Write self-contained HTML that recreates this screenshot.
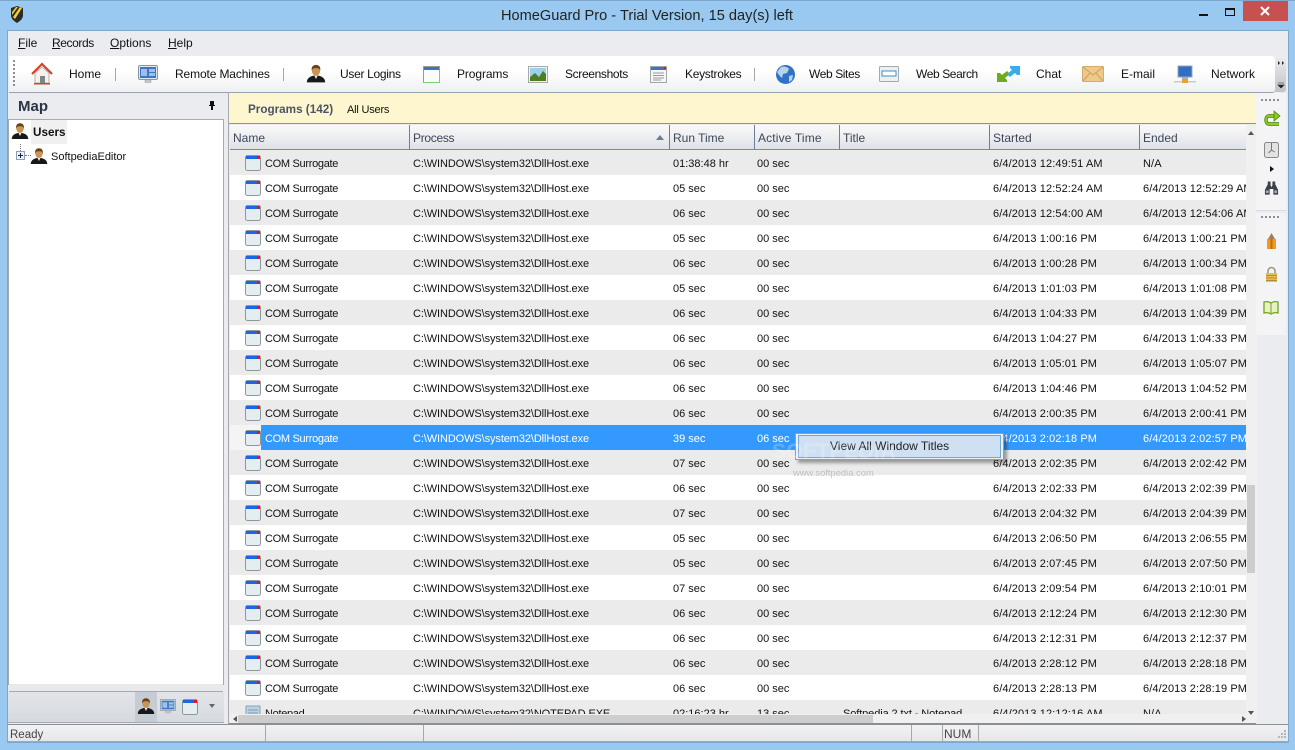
<!DOCTYPE html>
<html><head><meta charset="utf-8"><style>
html,body{margin:0;padding:0}
body{width:1295px;height:750px;overflow:hidden;position:relative;background:#99c9f0;font:12px/16px "Liberation Sans",sans-serif;color:#111}
.a{position:absolute}
.t{position:absolute;white-space:nowrap}
.tb{top:66px}
svg{position:absolute;overflow:visible}
.r{position:absolute;left:230px;width:1016px;height:25px;overflow:hidden;background:#fff;font-size:11px}
.g{background:#ebebeb}
.r span{position:absolute;top:6px;white-space:nowrap;overflow:hidden;height:16px}
.r svg{left:15px;top:5px}
.n{left:35px;width:140px;letter-spacing:-.3px}.p{left:183px;width:250px;letter-spacing:-.1px}.u{left:443px;width:80px}.v{left:527px;width:80px}.i{left:613px;width:140px;letter-spacing:-.1px}.s{left:763px;width:145px;letter-spacing:.1px}.e{left:913px;width:103px;letter-spacing:.1px}
.h{position:absolute;top:125px;height:25px;background:linear-gradient(#fafafa,#dfe1e6);border-bottom:1px solid #7f8b9c;box-sizing:border-box;color:#3c4658;padding:5px 0 0 3px;border-right:1px solid #6a7f9c;height:25px}
.sep{position:absolute;top:68px;width:1px;height:13px;background:#a4a8ae}
u{text-decoration:underline}
</style></head><body>
<svg width="0" height="0" style="position:absolute"><defs>
<symbol id="win" viewBox="0 0 16 16"><rect x=".5" y=".5" width="15" height="15" rx="2" fill="#e4eef0" stroke="#8d989c"/><rect x="1" y="1" width="14" height="3" fill="#1a66e6"/><rect x="12" y="1" width="3" height="3" fill="#e8102a"/></symbol>
<symbol id="user" viewBox="0 0 24 22"><path d="M1 21c0-5 4-7 8-8h6c4 1 8 3 8 8z" fill="#181818"/><path d="M10 13l2 4 2-4z" fill="#eee"/><ellipse cx="12" cy="7" rx="5" ry="6" fill="#c99455"/><path d="M7 7c-1-5 2-7 5-7s6 2 5 7c-1-3-3-3-5-3s-4 0-5 3z" fill="#6b4217"/></symbol>
<symbol id="mon" viewBox="0 0 20 20"><rect x=".5" y=".5" width="19" height="14" rx="1.5" fill="#dfe5ee" stroke="#8c97a6"/><rect x="2" y="2" width="16" height="11" fill="#3f78bd"/><rect x="3" y="4" width="6" height="7" fill="#9cc0e8"/><rect x="11" y="4" width="6" height="3" fill="#9cc0e8"/><rect x="11" y="8" width="6" height="3" fill="#9cc0e8"/><path d="M7 15h6v2.500H7z" fill="#c8ccd2" stroke="#999" stroke-width=".5"/></symbol>
</defs></svg>

<!-- title bar -->
<div class="a" style="left:0;top:0;width:1295px;height:1px;background:#7ea7cc"></div>
<svg style="left:10px;top:6px" width="14" height="17" viewBox="0 0 14 17"><path d="M1 2l6-2 6 2v7c0 4-3 6-6 8-3-2-6-4-6-8z" fill="#2b2b2b"/><path d="M3 11L10 1l2 1-7 11zM2 6l4-5h2L2 9z" fill="#f2cc30"/></svg>
<div class="t" style="left:501px;top:7px;font-size:14.6px;line-height:18px;color:#222">HomeGuard Pro - Trial Version, 15 day(s) left</div>
<div class="a" style="left:1199px;top:14px;width:9px;height:2px;background:#111"></div>
<div class="a" style="left:1225px;top:8px;width:8px;height:5px;border:1px solid #111;border-top-width:2px"></div>
<div class="a" style="left:1243px;top:1px;width:45px;height:20px;background:#c75050"></div>
<svg style="left:1260px;top:6px" width="10" height="10"><path d="M1 1l8 8M9 1L1 9" stroke="#fff" stroke-width="2"/></svg>

<!-- client -->
<div class="a" style="left:7px;top:30px;width:1282px;height:713px;background:#ebecf0;border:1px solid #7ea7cc;box-sizing:border-box"></div>
<!-- menu -->
<div class="t" style="left:18px;top:35px"><u>F</u>ile</div>
<div class="t" style="left:52px;top:35px;letter-spacing:-.4px"><u>R</u>ecords</div>
<div class="t" style="left:110px;top:35px"><u>O</u>ptions</div>
<div class="t" style="left:168px;top:35px"><u>H</u>elp</div>

<!-- toolbar -->
<div class="a" style="left:9px;top:56px;width:1266px;height:36px;background:linear-gradient(#fff,#fff 40%,#eff0f2);border-radius:0 3px 3px 0;border-bottom:1px solid #9aa3ad;box-sizing:content-box"></div>
<div class="a" style="left:13px;top:60px;width:2px;height:28px;background:repeating-linear-gradient(#8a8f96 0 2px,transparent 2px 4px)"></div>
<svg style="left:31px;top:63px" width="22" height="22" viewBox="0 0 22 22"><path d="M4 10v10h14V10L11 4z" fill="#f4f2ee" stroke="#b9b4ac"/><path d="M1 11L11 1l10 10" fill="none" stroke="#d8402a" stroke-width="2.200"/><rect x="9" y="13" width="5" height="7" fill="#80858a"/><rect x="3" y="20" width="16" height="1.500" fill="#d8402a"/></svg>
<div class="t tb" style="left:69px">Home</div><div class="sep" style="left:115px"></div>
<svg style="left:138px;top:65px" width="20" height="20"><use href="#mon" width="20" height="20"/></svg>
<div class="t tb" style="left:175px;letter-spacing:-.13px">Remote Machines</div><div class="sep" style="left:283px"></div>
<svg style="left:306px;top:64px" width="20" height="20"><use href="#user" width="20" height="20"/></svg>
<div class="t tb" style="left:340px;letter-spacing:-.3px">User Logins</div>
<svg style="left:423px;top:66px" width="17" height="17" viewBox="0 0 17 17"><rect x=".5" y=".5" width="16" height="16" fill="#fafcfa" stroke="#8fa08f"/><rect x="1" y="1" width="15" height="3" fill="#4a6cc4"/><path d="M.5 16.500H16.500V5" fill="none" stroke="#7ccf7c"/></svg>
<div class="t tb" style="left:457px;letter-spacing:-.1px">Programs</div>
<svg style="left:528px;top:66px" width="20" height="17" viewBox="0 0 20 17"><rect x=".5" y=".5" width="19" height="16" fill="#f2f2f0" stroke="#a8a8a4"/><rect x="2" y="2" width="16" height="13" fill="#9fd0ea"/><path d="M2 15v-4l5-4 4 4 4-6 3 3v7z" fill="#4f7d22"/></svg>
<div class="t tb" style="left:565px;letter-spacing:-.35px">Screenshots</div>
<svg style="left:650px;top:66px" width="17" height="17" viewBox="0 0 17 17"><rect x=".5" y=".5" width="16" height="16" fill="#f6f6f6" stroke="#9aa"/><rect x="1" y="1" width="15" height="3" fill="#4a6cc4"/><rect x="14" y="1" width="2" height="2" fill="#e01020"/><path d="M3 7h11M3 9.500h11M3 12h11M3 14h8" stroke="#9a9a9a"/></svg>
<div class="t tb" style="left:685px;letter-spacing:-.3px">Keystrokes</div><div class="sep" style="left:754px"></div>
<svg style="left:776px;top:65px" width="19" height="19" viewBox="0 0 19 19"><circle cx="9.500" cy="9.500" r="9.500" fill="#2f74c4"/><path d="M5 2c3-1 7 0 8 2l-2 4-4 1-1 4-3-3-2-3zM13 11l4-1-1 5-3 2z" fill="#b6d4ee"/></svg>
<div class="t tb" style="left:809px;letter-spacing:-.4px">Web Sites</div>
<svg style="left:879px;top:66px" width="20" height="16" viewBox="0 0 20 16"><rect x=".5" y=".5" width="19" height="15" rx="1" fill="#eef0f0" stroke="#a6a8aa"/><rect x="3" y="5" width="14" height="5" fill="#fff" stroke="#3a90d0"/></svg>
<div class="t tb" style="left:916px;letter-spacing:-.4px">Web Search</div>
<svg style="left:997px;top:66px" width="23" height="16" viewBox="0 0 23 16"><path d="M0 16V7h3l2 2 5-4 3 3-5 4 2 2v2z" fill="#6cab1e"/><path d="M23 0v9h-3l-2-2-5 4-3-3 5-4-2-2V0z" fill="#39aee6"/></svg>
<div class="t tb" style="left:1036px">Chat</div>
<svg style="left:1082px;top:66px" width="22" height="16" viewBox="0 0 22 16"><rect x=".5" y=".5" width="21" height="15" rx="1" fill="#eec98a" stroke="#d4ac6c"/><path d="M1 1l10 8 10-8M1 15l7-8M21 15l-7-8" fill="none" stroke="#c9a060"/></svg>
<div class="t tb" style="left:1121px">E-mail</div>
<svg style="left:1174px;top:66px" width="22" height="18" viewBox="0 0 22 18"><rect x="4" y="0" width="14" height="11" fill="#2f6fc4" stroke="#98a4b2"/><rect x="8" y="11" width="6" height="2" fill="#aab"/><rect x="0" y="15" width="22" height="1.500" fill="#c8ccc8"/><rect x="8" y="13" width="6" height="4" fill="#e8a030"/></svg>
<div class="t tb" style="left:1211px">Network</div>
<div class="a" style="left:1275px;top:57px;width:11px;height:35px;background:linear-gradient(#ececee,#bfc2c6);border-radius:0 3px 3px 0"></div>
<svg style="left:1277px;top:60px" width="8" height="30"><path d="M1 1l2 2-2 2zM5 1l2 2-2 2z" fill="#222"/><path d="M1 23h6M1 25h6l-3 3z" fill="#222" stroke="#222" stroke-width=".6"/></svg>

<!-- map panel -->
<div class="t" style="left:18px;top:98px;font-size:15px;line-height:18px;font-weight:bold;color:#2c3444">Map</div>
<svg style="left:208px;top:101px" width="8" height="9"><path d="M2 0h4v4h1v1H5v4H3V5H1V4h1z" fill="#111"/></svg>
<div class="a" style="left:8px;top:119px;width:216px;height:566px;background:#fff;border:1px solid #a6a9ae;box-sizing:border-box"></div>
<svg style="left:11px;top:123px" width="18" height="17"><use href="#user" width="18" height="17"/></svg>
<div class="a" style="left:31px;top:120px;width:36px;height:24px;background:#f0f0f0"></div>
<div class="t" style="left:33px;top:125px;font-weight:bold;font-size:11.7px">Users</div>
<div class="a" style="left:20px;top:144px;height:7px;border-left:1px dotted #777"></div>
<div class="a" style="left:16px;top:151px;width:7px;height:7px;border:1px solid #8e9fb4;background:#eef"></div>
<svg style="left:16px;top:151px" width="9" height="9"><path d="M2 4.500h5M4.500 2v5" stroke="#123"/></svg>
<div class="a" style="left:25px;top:155px;width:6px;border-top:1px dotted #777"></div>
<svg style="left:30px;top:148px" width="18" height="17"><use href="#user" width="18" height="17"/></svg>
<div class="t" style="left:51px;top:149px;font-size:11px">SoftpediaEditor</div>
<div class="a" style="left:9px;top:684px;width:214px;height:7px;background:#e8e9ec;border-bottom:1px solid #a6a9ae"></div>
<div class="a" style="left:8px;top:692px;width:216px;height:31px;background:linear-gradient(#e2e4e8,#d6dae0);border-bottom:1px solid #a6a9ae;box-sizing:border-box"></div>
<div class="a" style="left:135px;top:692px;width:22px;height:30px;background:#c6ccd4"></div>
<svg style="left:137px;top:698px" width="18" height="17"><use href="#user" width="18" height="17"/></svg>
<svg style="left:160px;top:699px" width="16" height="16"><use href="#mon" width="16" height="16"/></svg>
<svg style="left:182px;top:699px" width="16" height="16"><use href="#win" width="16" height="16"/></svg>
<div class="a" style="left:209px;top:704px;border:3px solid transparent;border-top:4px solid #666"></div>

<!-- right list -->
<div class="a" style="left:225px;top:93px;width:4px;height:631px;background:#ebecf0"></div>
<div class="a" style="left:228px;top:93px;width:1px;height:631px;background:#a6a9ae"></div>
<div class="a" style="left:229px;top:93px;width:1027px;height:31px;background:#fdf6cf;border-bottom:1px solid #8a93a0;box-sizing:border-box"></div>
<div class="t" style="left:248px;top:102px;font-weight:bold;color:#4c5464;font-size:11.7px">Programs (142)</div>
<div class="t" style="left:347px;top:102px;font-size:11px;letter-spacing:-.2px">All Users</div>

<div class="h" style="left:230px;width:180px;padding-left:3px">Name</div>
<div class="h" style="left:410px;width:260px;letter-spacing:-.3px">Process</div>
<div class="a" style="left:656px;top:135px;border:4px solid transparent;border-bottom:5px solid #6c7c94;border-top:0"></div>
<div class="h" style="left:670px;width:85px">Run Time</div>
<div class="h" style="left:755px;width:85px;letter-spacing:.15px">Active Time</div>
<div class="h" style="left:840px;width:150px">Title</div>
<div class="h" style="left:990px;width:150px">Started</div>
<div class="h" style="left:1140px;width:106px;border-right:0">Ended</div>

<div class="r g" style="top:150px"><svg width="16" height="16"><use href="#win"/></svg><span class="n">COM Surrogate</span><span class="p">C:\WINDOWS\system32\DllHost.exe</span><span class="u">01:38:48 hr</span><span class="v">00 sec</span><span class="s">6/4/2013 12:49:51 AM</span><span class="e">N/A</span></div>
<div class="r" style="top:175px"><svg width="16" height="16"><use href="#win"/></svg><span class="n">COM Surrogate</span><span class="p">C:\WINDOWS\system32\DllHost.exe</span><span class="u">05 sec</span><span class="v">00 sec</span><span class="s">6/4/2013 12:52:24 AM</span><span class="e">6/4/2013 12:52:29 AM</span></div>
<div class="r g" style="top:200px"><svg width="16" height="16"><use href="#win"/></svg><span class="n">COM Surrogate</span><span class="p">C:\WINDOWS\system32\DllHost.exe</span><span class="u">06 sec</span><span class="v">00 sec</span><span class="s">6/4/2013 12:54:00 AM</span><span class="e">6/4/2013 12:54:06 AM</span></div>
<div class="r" style="top:225px"><svg width="16" height="16"><use href="#win"/></svg><span class="n">COM Surrogate</span><span class="p">C:\WINDOWS\system32\DllHost.exe</span><span class="u">05 sec</span><span class="v">00 sec</span><span class="s">6/4/2013 1:00:16 PM</span><span class="e">6/4/2013 1:00:21 PM</span></div>
<div class="r g" style="top:250px"><svg width="16" height="16"><use href="#win"/></svg><span class="n">COM Surrogate</span><span class="p">C:\WINDOWS\system32\DllHost.exe</span><span class="u">06 sec</span><span class="v">00 sec</span><span class="s">6/4/2013 1:00:28 PM</span><span class="e">6/4/2013 1:00:34 PM</span></div>
<div class="r" style="top:275px"><svg width="16" height="16"><use href="#win"/></svg><span class="n">COM Surrogate</span><span class="p">C:\WINDOWS\system32\DllHost.exe</span><span class="u">05 sec</span><span class="v">00 sec</span><span class="s">6/4/2013 1:01:03 PM</span><span class="e">6/4/2013 1:01:08 PM</span></div>
<div class="r g" style="top:300px"><svg width="16" height="16"><use href="#win"/></svg><span class="n">COM Surrogate</span><span class="p">C:\WINDOWS\system32\DllHost.exe</span><span class="u">06 sec</span><span class="v">00 sec</span><span class="s">6/4/2013 1:04:33 PM</span><span class="e">6/4/2013 1:04:39 PM</span></div>
<div class="r" style="top:325px"><svg width="16" height="16"><use href="#win"/></svg><span class="n">COM Surrogate</span><span class="p">C:\WINDOWS\system32\DllHost.exe</span><span class="u">06 sec</span><span class="v">00 sec</span><span class="s">6/4/2013 1:04:27 PM</span><span class="e">6/4/2013 1:04:33 PM</span></div>
<div class="r g" style="top:350px"><svg width="16" height="16"><use href="#win"/></svg><span class="n">COM Surrogate</span><span class="p">C:\WINDOWS\system32\DllHost.exe</span><span class="u">06 sec</span><span class="v">00 sec</span><span class="s">6/4/2013 1:05:01 PM</span><span class="e">6/4/2013 1:05:07 PM</span></div>
<div class="r" style="top:375px"><svg width="16" height="16"><use href="#win"/></svg><span class="n">COM Surrogate</span><span class="p">C:\WINDOWS\system32\DllHost.exe</span><span class="u">06 sec</span><span class="v">00 sec</span><span class="s">6/4/2013 1:04:46 PM</span><span class="e">6/4/2013 1:04:52 PM</span></div>
<div class="r g" style="top:400px"><svg width="16" height="16"><use href="#win"/></svg><span class="n">COM Surrogate</span><span class="p">C:\WINDOWS\system32\DllHost.exe</span><span class="u">06 sec</span><span class="v">00 sec</span><span class="s">6/4/2013 2:00:35 PM</span><span class="e">6/4/2013 2:00:41 PM</span></div>
<div class="r" style="top:425px;color:#fff;background:linear-gradient(90deg,#f4f4f4 31px,#3399ff 31px)"><div class="a" style="left:31px;right:0;top:24px;height:1px;background:#c87a20"></div><svg width="16" height="16"><use href="#win"/></svg><span class="n">COM Surrogate</span><span class="p">C:\WINDOWS\system32\DllHost.exe</span><span class="u">39 sec</span><span class="v">06 sec</span><span class="s">6/4/2013 2:02:18 PM</span><span class="e">6/4/2013 2:02:57 PM</span></div>
<div class="r g" style="top:450px"><svg width="16" height="16"><use href="#win"/></svg><span class="n">COM Surrogate</span><span class="p">C:\WINDOWS\system32\DllHost.exe</span><span class="u">07 sec</span><span class="v">00 sec</span><span class="s">6/4/2013 2:02:35 PM</span><span class="e">6/4/2013 2:02:42 PM</span></div>
<div class="r" style="top:475px"><svg width="16" height="16"><use href="#win"/></svg><span class="n">COM Surrogate</span><span class="p">C:\WINDOWS\system32\DllHost.exe</span><span class="u">06 sec</span><span class="v">00 sec</span><span class="s">6/4/2013 2:02:33 PM</span><span class="e">6/4/2013 2:02:39 PM</span></div>
<div class="r g" style="top:500px"><svg width="16" height="16"><use href="#win"/></svg><span class="n">COM Surrogate</span><span class="p">C:\WINDOWS\system32\DllHost.exe</span><span class="u">07 sec</span><span class="v">00 sec</span><span class="s">6/4/2013 2:04:32 PM</span><span class="e">6/4/2013 2:04:39 PM</span></div>
<div class="r" style="top:525px"><svg width="16" height="16"><use href="#win"/></svg><span class="n">COM Surrogate</span><span class="p">C:\WINDOWS\system32\DllHost.exe</span><span class="u">05 sec</span><span class="v">00 sec</span><span class="s">6/4/2013 2:06:50 PM</span><span class="e">6/4/2013 2:06:55 PM</span></div>
<div class="r g" style="top:550px"><svg width="16" height="16"><use href="#win"/></svg><span class="n">COM Surrogate</span><span class="p">C:\WINDOWS\system32\DllHost.exe</span><span class="u">05 sec</span><span class="v">00 sec</span><span class="s">6/4/2013 2:07:45 PM</span><span class="e">6/4/2013 2:07:50 PM</span></div>
<div class="r" style="top:575px"><svg width="16" height="16"><use href="#win"/></svg><span class="n">COM Surrogate</span><span class="p">C:\WINDOWS\system32\DllHost.exe</span><span class="u">07 sec</span><span class="v">00 sec</span><span class="s">6/4/2013 2:09:54 PM</span><span class="e">6/4/2013 2:10:01 PM</span></div>
<div class="r g" style="top:600px"><svg width="16" height="16"><use href="#win"/></svg><span class="n">COM Surrogate</span><span class="p">C:\WINDOWS\system32\DllHost.exe</span><span class="u">06 sec</span><span class="v">00 sec</span><span class="s">6/4/2013 2:12:24 PM</span><span class="e">6/4/2013 2:12:30 PM</span></div>
<div class="r" style="top:625px"><svg width="16" height="16"><use href="#win"/></svg><span class="n">COM Surrogate</span><span class="p">C:\WINDOWS\system32\DllHost.exe</span><span class="u">06 sec</span><span class="v">00 sec</span><span class="s">6/4/2013 2:12:31 PM</span><span class="e">6/4/2013 2:12:37 PM</span></div>
<div class="r g" style="top:650px"><svg width="16" height="16"><use href="#win"/></svg><span class="n">COM Surrogate</span><span class="p">C:\WINDOWS\system32\DllHost.exe</span><span class="u">06 sec</span><span class="v">00 sec</span><span class="s">6/4/2013 2:28:12 PM</span><span class="e">6/4/2013 2:28:18 PM</span></div>
<div class="r" style="top:675px"><svg width="16" height="16"><use href="#win"/></svg><span class="n">COM Surrogate</span><span class="p">C:\WINDOWS\system32\DllHost.exe</span><span class="u">06 sec</span><span class="v">00 sec</span><span class="s">6/4/2013 2:28:13 PM</span><span class="e">6/4/2013 2:28:19 PM</span></div>
<div class="r g" style="top:700px;height:14px"><svg width="16" height="16" viewBox="0 0 16 16"><rect x="1" y="1" width="14" height="15" fill="#b8d4e4" stroke="#8aa4b4"/><path d="M3 5h10M3 8h10M3 11h10" stroke="#7c9cb0"/></svg><span class="n">Notepad</span><span class="p">C:\WINDOWS\system32\NOTEPAD.EXE</span><span class="u">02:16:23 hr</span><span class="v">13 sec</span><span class="i">Softpedia 2.txt - Notepad</span><span class="s">6/4/2013 12:12:16 AM</span><span class="e">N/A</span></div>

<!-- scrollbars -->
<div class="a" style="left:1246px;top:125px;width:10px;height:599px;background:#f0f0f0"></div>
<div class="a" style="left:1247px;top:485px;width:8px;height:88px;background:#cdcdcd"></div>
<div class="a" style="left:1248px;top:131px;border:3px solid transparent;border-bottom:4px solid #555;border-top:0"></div>
<div class="a" style="left:1248px;top:711px;border:3px solid transparent;border-top:4px solid #555;border-bottom:0"></div>
<div class="a" style="left:230px;top:714px;width:1016px;height:9px;background:#f0f0f0"></div>
<div class="a" style="left:238px;top:715px;width:635px;height:8px;background:#cdcdcd"></div>
<div class="a" style="left:233px;top:716px;border:3px solid transparent;border-right:4px solid #555;border-left:0"></div>
<div class="a" style="left:1242px;top:716px;border:3px solid transparent;border-left:4px solid #555;border-right:0"></div>
<div class="a" style="left:229px;top:723px;width:1027px;height:1px;background:#8a8f96"></div>

<!-- right toolbar -->
<div class="a" style="left:1256px;top:93px;width:30px;height:631px;background:#ebecf0"></div>
<div class="a" style="left:1256px;top:93px;width:30px;height:118px;background:#f4f4f6;border-bottom:1px solid #dcdde0;box-sizing:border-box"></div>
<div class="a" style="left:1256px;top:213px;width:30px;height:122px;background:#f4f4f6"></div>
<div class="a" style="left:1261px;top:99px;width:18px;height:2px;background:repeating-linear-gradient(90deg,#8a8f96 0 2px,transparent 2px 4px)"></div>
<div class="a" style="left:1261px;top:216px;width:18px;height:2px;background:repeating-linear-gradient(90deg,#8a8f96 0 2px,transparent 2px 4px)"></div>
<svg style="left:1264px;top:111px" width="16" height="15" viewBox="0 0 16 15"><path d="M15 13H5C1 13 1 5 5 5h6" fill="none" stroke="#3c7a08" stroke-width="3.400"/><path d="M15 13H5C1 13 1 5 5 5h6" fill="none" stroke="#8fcb1a" stroke-width="2"/><path d="M10 0l6 5-6 5z" fill="#8fcb1a" stroke="#3c7a08" stroke-width=".7"/></svg>
<svg style="left:1264px;top:142px" width="15" height="16" viewBox="0 0 15 16"><rect x=".5" y=".5" width="14" height="15" rx="2" fill="#e2e2e2" stroke="#888"/><path d="M7.500 1v7l-3 3M7.500 8l3 2" fill="none" stroke="#777"/></svg>
<div class="a" style="left:1270px;top:166px;border:3px solid transparent;border-left:4px solid #111;border-right:0"></div>
<svg style="left:1264px;top:181px" width="15" height="15" viewBox="0 0 16 15"><path d="M4 0h3v4l1 2 1-2V0h3v3l3 6v5H10V8H6v6H1V9l3-6z" fill="#3c4248"/><circle cx="3.500" cy="11" r="1.600" fill="#aab"/><circle cx="12.500" cy="11" r="1.600" fill="#aab"/></svg>
<svg style="left:1267px;top:233px" width="9" height="16" viewBox="0 0 9 16"><path d="M4.500 0L8 6H1z" fill="#a08050"/><rect x="0" y="6" width="9" height="10" fill="#ec9a20"/><rect x="3.500" y="6" width="2" height="10" fill="#c26a10"/></svg>
<svg style="left:1265px;top:266px" width="13" height="17" viewBox="0 0 13 17"><path d="M3 8V5a3.500 3.500 0 0 1 7 0v3" fill="none" stroke="#a09880" stroke-width="1.600"/><rect x="1" y="7" width="11" height="9" fill="#e6bc58"/><path d="M1 9.500h11M1 12h11M1 14.500h11" stroke="#b68e30"/></svg>
<svg style="left:1263px;top:301px" width="16" height="14" viewBox="0 0 16 14"><path d="M1 1c3-1 5 0 7 1 2-1 4-2 7-1v11c-3-1-5 0-7 1-2-1-4-2-7-1z" fill="#e8f0c8" stroke="#6fa81a" stroke-width="1.300"/><path d="M8 2v10" stroke="#6fa81a"/></svg>
<div class="a" style="left:1256px;top:335px;width:1px;height:389px;background:#f0f0f0"></div>

<!-- context menu -->
<div class="a" style="left:795px;top:433px;width:209px;height:27px;background:#f0f0f0;border:1px solid #9c9c9c;box-sizing:border-box;box-shadow:3px 3px 3px rgba(0,0,0,.35)"></div>
<div class="a" style="left:798px;top:435px;width:203px;height:23px;background:#cfe0f2;border:1px solid #6ea8e0;box-sizing:border-box"></div>
<div class="t" style="left:830px;top:438px;color:#222">View All Window Titles</div>

<!-- watermark -->
<div class="t" style="left:772px;top:441px;font-size:21px;line-height:22px;font-weight:bold;letter-spacing:.4px;color:#fff;opacity:.22">SOFTPEDIA</div>
<div class="t" style="left:793px;top:466px;font-size:9.4px;line-height:14px;color:#b8b8b8;opacity:.85">www.softpedia.com</div>

<!-- status -->
<div class="a" style="left:8px;top:724px;width:1280px;height:18px;background:linear-gradient(#f2f2f4,#e6e7ea);border-top:1px solid #8a8f96;border-bottom:1px solid #a4a8ae;box-sizing:border-box"></div>
<div class="t" style="left:10px;top:727px;color:#444;font-size:11.5px">Ready</div>
<div class="a" style="left:265px;top:725px;width:1px;height:16px;background:#a4a8ae"></div>
<div class="a" style="left:423px;top:725px;width:1px;height:16px;background:#a4a8ae"></div>
<div class="a" style="left:911px;top:725px;width:1px;height:16px;background:#a4a8ae"></div>
<div class="a" style="left:942px;top:725px;width:1px;height:16px;background:#a4a8ae"></div>
<div class="a" style="left:978px;top:725px;width:1px;height:16px;background:#a4a8ae"></div>
<div class="t" style="left:944px;top:726px;color:#444">NUM</div>
<svg style="left:1276px;top:729px" width="11" height="11"><path d="M8 1h2v2H8zM5 4h2v2H5zM8 4h2v2H8zM2 7h2v2H2zM5 7h2v2H5zM8 7h2v2H8z" fill="#b4b8bc"/></svg>
</body></html>
